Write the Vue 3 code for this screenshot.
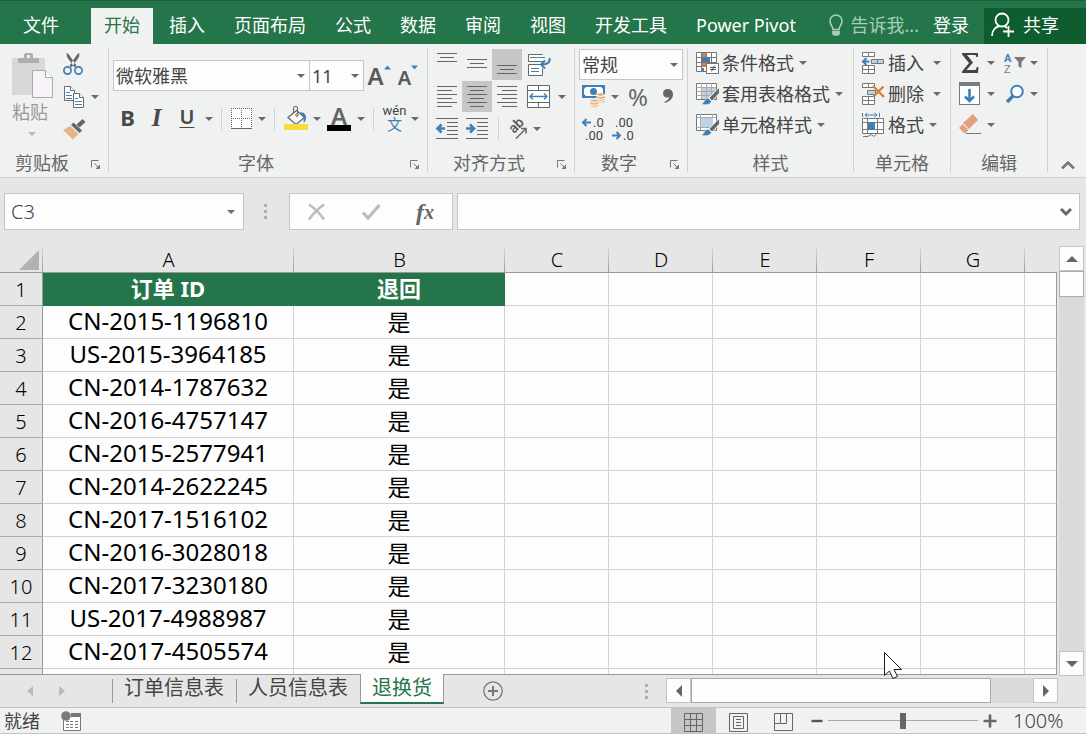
<script setup>
import { h, ref } from 'vue'

const Caret = (props) =>
  h('svg', { class: 'caret', width: 12, height: 8, viewBox: '0 0 12 8', 'aria-hidden': 'true' }, [
    h('path', { d: 'M2 2h8l-4 4z', fill: props.color || '#6a6a6a' })
  ])
Caret.props = ['color']

const Launcher = () =>
  h('svg', { width: 10, height: 10, viewBox: '0 0 10 10', fill: 'none', stroke: '#777', 'aria-hidden': 'true' }, [
    h('path', { d: 'M.5 7.5v-7h7M3.5 3.5l4 4' }),
    h('path', { d: 'M9 4.5V9H4.5z', fill: '#777', stroke: 'none' })
  ])

const tabs = ['开始', '插入', '页面布局', '公式', '数据', '审阅', '视图', '开发工具', 'Power Pivot']
const activeTab = ref('开始')

const columns = ['A', 'B', 'C', 'D', 'E', 'F', 'G', '']
const orders = [
  'CN-2015-1196810',
  'US-2015-3964185',
  'CN-2014-1787632',
  'CN-2016-4757147',
  'CN-2015-2577941',
  'CN-2014-2622245',
  'CN-2017-1516102',
  'CN-2016-3028018',
  'CN-2017-3230180',
  'US-2017-4988987',
  'CN-2017-4505574'
]
const sheets = ['订单信息表', '人员信息表', '退换货']
const activeSheet = ref('退换货')
const zoom = ref(50)
const formula = ref('')
const cellName = ref('C3')
</script>

<template>
  <div class="app">
    <nav class="tabbar" aria-label="功能区选项卡">
      <button class="file">文件</button>
      <button v-for="t in tabs" :key="t" class="tab" :class="{ active: t === activeTab }" @click="activeTab = t">{{ t }}</button>
      <span class="account">
        <button class="tell">
          <svg width="14" height="22" viewBox="0 0 14 22" fill="none" stroke="#a9cdb9" stroke-width="1.6" aria-hidden="true">
            <path d="M4 15.5c0-3-3-4.5-3-8.500a6 6 0 0 1 12 0c0 4-3 5.500-3 8.500z" />
            <path d="M4 17.500h6v2.500l-1.500 1h-3L4 20z" fill="#a9cdb9" />
          </svg>
          <span>告诉我...</span>
        </button>
        <button class="login">登录</button>
        <button class="share">
          <svg width="23" height="26" viewBox="0 0 23 26" fill="none" stroke="#fff" stroke-width="1.800" aria-hidden="true">
            <circle cx="11" cy="8" r="6.500" />
            <path d="M1 24c0-5 3-9 7.500-10M13.500 14l2.500 2M17.500 14v11M12 19.500h11" />
          </svg>
          <span>共享</span>
        </button>
      </span>
    </nav>

    <div class="ribbon">
      <section class="group clipboard">
        <div class="body clip-body">
          <button class="paste" disabled>
            <svg width="42" height="46" viewBox="0 0 42 46" aria-hidden="true">
              <rect x="0" y="6" width="33" height="37" rx="1" fill="#dad7da" />
              <path d="M6 10V7q0-1 1-1h5V3q0-2 2-2h5q2 0 2 2v3h5q1 0 1 1v4H6z" fill="#b0aeb0" />
              <rect x="15" y="3" width="3" height="3" fill="#f0f2f1" />
              <path d="M20.500 18.500h13l7 7v20h-20z" fill="#f7f2f8" stroke="#aaa" />
              <path d="M33.500 18.500v7h7" fill="#fff" stroke="#aaa" />
            </svg>
            <span>粘贴</span>
            <Caret color="#b8b8b8" />
          </button>
          <div class="stack">
            <button class="mini" aria-label="剪切">
              <svg width="22" height="22" viewBox="0 0 22 22" fill="none" aria-hidden="true">
                <path d="M3.500 0l2 1 8 11.500-2 2L4 4zM16.500 0l-2 1-8 11.500 2 2L16 4z" fill="#666" />
                <circle cx="4.500" cy="17.500" r="3.600" stroke="#3f7fb8" stroke-width="1.700" />
                <circle cx="15.500" cy="17.500" r="3.600" stroke="#3f7fb8" stroke-width="1.700" />
              </svg>
            </button>
            <div class="line">
              <button class="mini" aria-label="复制">
                <svg width="22" height="22" viewBox="0 0 22 22" fill="#fff" stroke="#6a6a6a" aria-hidden="true">
                  <path d="M1.500.5h6l4 4v10h-10z" />
                  <path d="M7.500.5v4h4" />
                  <path d="M3 6.500h4M3 9.500h6M3 12.500h6" stroke="#3f7fb8" />
                  <path d="M10.500 7.500h6l4 4v10h-10z" />
                  <path d="M16.500 7.500v4h4" />
                  <path d="M12 12.500h3M12 15.500h7M12 18.500h7" stroke="#3f7fb8" />
                </svg>
              </button>
              <button class="drop" aria-label="复制选项"><Caret /></button>
            </div>
            <button class="mini" aria-label="格式刷">
              <svg width="23" height="22" viewBox="0 0 23 22" aria-hidden="true">
                <path d="M19.500 0l3 3-6 5.500-3-3z" fill="#666" />
                <path d="M10.500 3.500l8.500 8-2.500 2.500L8 6z" fill="#666" />
                <path d="M7 7l8.500 8L10 20.500 0 11z" fill="#e9b384" />
              </svg>
            </button>
          </div>
        </div>
        <footer><span>剪贴板</span><button class="launch" aria-label="剪贴板设置"><Launcher /></button></footer>
      </section>

      <section class="group font">
        <div class="body font-body">
          <div class="line">
            <label class="combo family">
              <select aria-label="字体"><option>微软雅黑</option></select><Caret />
            </label>
            <label class="combo size">
              <select aria-label="字号"><option>11</option></select><Caret />
            </label>
            <button class="tool grow" aria-label="增大字号">
              <b>A</b>
              <svg width="7" height="5" viewBox="0 0 7 5" aria-hidden="true"><path d="M0 4.500L3.500.5 7 4.500z" fill="#3f7fb8" /></svg>
            </button>
            <button class="tool shrink" aria-label="减小字号">
              <b>A</b>
              <svg width="7" height="5" viewBox="0 0 7 5" aria-hidden="true"><path d="M0 .5h7L3.500 4.500z" fill="#3f7fb8" /></svg>
            </button>
          </div>
          <div class="line">
            <button class="tool letter bold">B</button>
            <button class="tool letter italic">I</button>
            <button class="tool letter under">U</button>
            <button class="drop" aria-label="下划线选项"><Caret /></button>
            <i class="sep"></i>
            <button class="tool border" aria-label="边框">
              <svg width="22" height="21" viewBox="0 0 22 21" stroke="#666" fill="none" shape-rendering="crispEdges" aria-hidden="true">
                <rect x="1" y="1" width="20" height="19" fill="#fff" stroke="none" />
                <path d="M0 .5h21M0 10.500h21M.5 0v20M10.500 0v20M20.500 0v20" stroke-dasharray="1 1" />
                <path d="M0 20.500h21" />
              </svg>
            </button>
            <button class="drop" aria-label="边框选项"><Caret /></button>
            <i class="sep"></i>
            <button class="tool fill" aria-label="填充颜色">
              <svg width="24" height="25" viewBox="0 0 24 25" fill="none" stroke="#666" aria-hidden="true">
                <path d="M12.500 4.500l8 7-8.500 7-8-7z" fill="#fff" stroke-width="1.300" />
                <path d="M9.500 8V2q0-1.500 1.500-1.500h1q1.500 0 1.500 1.500v6" />
                <circle cx="13" cy="9" r="1.300" fill="#fff" />
                <path d="M16 6c4 0 6.500 3 6 6 0 2-1 4-2.500 5 .5-3 .5-7-3.500-11z" fill="#3f7fb8" stroke="none" />
                <rect y="18" width="24" height="6" fill="#f8dc3d" stroke="none" />
              </svg>
            </button>
            <button class="drop" aria-label="填充颜色选项"><Caret /></button>
            <button class="tool ink" aria-label="字体颜色"><b>A</b></button>
            <button class="drop" aria-label="字体颜色选项"><Caret /></button>
            <i class="sep"></i>
            <button class="tool pinyin"><span>wén</span><span class="han">文</span></button>
            <button class="drop" aria-label="拼音选项"><Caret /></button>
          </div>
        </div>
        <footer><span>字体</span><button class="launch" aria-label="字体设置"><Launcher /></button></footer>
      </section>

      <section class="group align">
        <div class="body rows">
          <div class="line">
            <button class="cell" aria-label="顶端对齐"><svg width="20" height="23" viewBox="0 0 20 23" stroke="#666" aria-hidden="true"><path d="M0 .5h20M3 4.500h14M0 8.500h20" /></svg></button>
            <button class="cell" aria-label="垂直居中"><svg width="20" height="23" viewBox="0 0 20 23" stroke="#666" aria-hidden="true"><path d="M0 6.500h20M3 10.500h14M0 14.500h20" /></svg></button>
            <button class="cell on" aria-label="底端对齐"><svg width="20" height="23" viewBox="0 0 20 23" stroke="#666" aria-hidden="true"><path d="M0 12.500h20M3 16.500h14M0 20.500h20" /></svg></button>
            <button class="tool wrap" aria-label="自动换行">
              <svg width="24" height="23" viewBox="0 0 24 23" fill="none" stroke="#666" aria-hidden="true">
                <path d="M15.500 2V1.500h-14v7h14V8M15.500 12.500v-1h-14v11h14v-7" fill="#fff" />
                <path d="M3 4.500h15M4 15.500h8M4 18.500h8" stroke="#3f7fb8" />
                <path d="M22.500 5c1 4-2 6.500-7 6.500M18 7.500l-4 4 4 4" stroke="#3f7fb8" stroke-width="2" />
              </svg>
            </button>
          </div>
          <div class="line">
            <button class="cell" aria-label="左对齐"><svg width="20" height="21" viewBox="0 0 20 21" stroke="#666" aria-hidden="true"><path d="M0 .5h20M0 4.500h15M0 8.500h20M0 12.500h15M0 16.500h20M0 20.500h15" /></svg></button>
            <button class="cell on" aria-label="居中"><svg width="20" height="21" viewBox="0 0 20 21" stroke="#666" aria-hidden="true"><path d="M0 .5h20M3 4.500h14M0 8.500h20M3 12.500h14M0 16.500h20M3 20.500h14" /></svg></button>
            <button class="cell" aria-label="右对齐"><svg width="20" height="21" viewBox="0 0 20 21" stroke="#666" aria-hidden="true"><path d="M0 .5h20M5 4.500h15M0 8.500h20M5 12.500h15M0 16.500h20M5 20.500h15" /></svg></button>
            <button class="tool wrap" aria-label="合并后居中">
              <svg width="24" height="23" viewBox="0 0 24 23" fill="none" stroke="#666" aria-hidden="true">
                <path d="M.5.500h22v22H.5zM.5 5.500h22M.5 17.500h22M11.500 .5v5M11.500 17.500v5" fill="#fff" />
                <path d="M3 11.500h17M6 8.500l-3 3 3 3M17 8.500l3 3-3 3" stroke="#3f7fb8" stroke-width="1.400" />
              </svg>
            </button>
            <button class="drop" aria-label="合并选项"><Caret /></button>
          </div>
          <div class="line">
            <button class="cell" aria-label="减少缩进量">
              <svg width="22" height="21" viewBox="0 0 22 21" fill="none" stroke="#666" aria-hidden="true">
                <path d="M0 .5h22M11 4.500h11M11 8.500h11M11 12.500h11M11 16.500h11M0 20.500h22" />
                <path d="M9 10.500H2M5.500 6.500l-4 4 4 4" stroke="#3f7fb8" stroke-width="2.600" />
              </svg>
            </button>
            <button class="cell" aria-label="增加缩进量">
              <svg width="22" height="21" viewBox="0 0 22 21" fill="none" stroke="#666" aria-hidden="true">
                <path d="M0 .5h22M11 4.500h11M11 8.500h11M11 12.500h11M11 16.500h11M0 20.500h22" />
                <path d="M0 10.500h7M4 6.500l4 4-4 4" stroke="#3f7fb8" stroke-width="2.600" />
              </svg>
            </button>
            <i class="sep"></i>
            <button class="tool angle" aria-label="方向">
              <svg width="24" height="25" viewBox="0 0 24 25" fill="none" stroke="#666" aria-hidden="true">
                <text transform="translate(8 18) rotate(-45)" font-family="Roboto" font-weight="500" font-size="14" fill="#555" stroke="none">ab</text>
                <path d="M10 22.500L20 12.500M15 12.500h5v5" stroke-width="1.500" />
              </svg>
            </button>
            <button class="drop" aria-label="方向选项"><Caret /></button>
          </div>
        </div>
        <footer><span>对齐方式</span><button class="launch" aria-label="对齐设置"><Launcher /></button></footer>
      </section>

      <section class="group number">
        <div class="body rows">
          <label class="combo format">
            <select aria-label="数字格式"><option>常规</option></select><Caret />
          </label>
          <div class="line">
            <button class="cell" aria-label="会计数字格式">
              <svg width="24" height="23" viewBox="0 0 24 23" fill="none" aria-hidden="true">
                <rect x="0" y="0" width="23" height="13" fill="#3f7fb8" />
                <path d="M2 4l2-2h15l2 2v5l-2 2H4l-2-2z" fill="#fff" />
                <circle cx="11.500" cy="6.500" r="3.500" fill="#3f7fb8" />
                <path d="M14 9.500q0-1.500 4.500-1.500t4.500 1.500v8H14z" fill="#e9b384" />
                <path d="M8 15.500q0-1.500 4.500-1.500t4.500 1.500v6q-4.500 2-9 0z" fill="#e9b384" stroke="#f0f2f1" />
                <path d="M14 10.500q4.500 2 9 0M14 13.500q4.500 2 9 0M8.500 16.500q4 2 8 0M8.500 19.500q4 2 8 0M18 16.500q2 0 5-1" stroke="#fff" />
              </svg>
            </button>
            <button class="drop" aria-label="会计格式选项"><Caret /></button>
            <button class="tool percent">%</button>
            <button class="tool comma" aria-label="千位分隔">
              <svg width="12" height="17" viewBox="0 0 12 17" aria-hidden="true"><path d="M5.500 1c3.500 0 5.500 2 5.500 5.500 0 4-3.500 7-8 8.500L2.500 13.500C5.500 12.500 7 11 7 9 3.500 10.500 1 8.500 1 5.500 1 2.500 3 1 5.500 1z" fill="#666" /></svg>
            </button>
          </div>
          <div class="line">
            <button class="cell" aria-label="增加小数位数">
              <svg width="26" height="27" viewBox="0 0 26 27" font-family="Roboto" font-size="13" fill="#444" aria-hidden="true">
                <path d="M10 7.500H2M5.500 4L2 7.500 5.500 11" fill="none" stroke="#3f7fb8" stroke-width="2" />
                <text x="12" y="12">.0</text><text x="4" y="25">.00</text>
              </svg>
            </button>
            <button class="cell" aria-label="减少小数位数">
              <svg width="26" height="27" viewBox="0 0 26 27" font-family="Roboto" font-size="13" fill="#444" aria-hidden="true">
                <path d="M1 20.500h8M5.500 17L9 20.500 5.500 24" fill="none" stroke="#3f7fb8" stroke-width="2" />
                <text x="4" y="12">.00</text><text x="12" y="25">.0</text>
              </svg>
            </button>
          </div>
        </div>
        <footer><span>数字</span><button class="launch" aria-label="数字设置"><Launcher /></button></footer>
      </section>

      <section class="group styles">
        <div class="body items">
          <button class="item">
            <svg width="24" height="24" viewBox="0 0 24 24" fill="none" stroke="#777" aria-hidden="true">
              <path d="M.5 1.500h20v19H.5zM5.500 1v19M10.500 1v19M15.500 1v19M.5 6.500h20M.5 11.500h20M.5 15.500h20" fill="#fff" />
              <rect x="6" y="2" width="4" height="4" fill="#d2813a" stroke="none" />
              <rect x="6" y="7" width="8" height="4" fill="#3f7fb8" stroke="none" />
              <rect x="6" y="12" width="4" height="4" fill="#d2813a" stroke="none" />
              <rect x="6" y="17" width="2" height="3" fill="#3f7fb8" stroke="none" />
              <rect x="10.500" y="12.500" width="12" height="10" fill="#fff" />
              <path d="M14 16.500h6M14 18.500h6M18.500 14.500l-3 6" stroke="#555" />
            </svg>
            <span>条件格式</span><Caret />
          </button>
          <button class="item">
            <svg width="24" height="24" viewBox="0 0 24 24" fill="none" stroke="#777" aria-hidden="true">
              <path d="M.5 1.500h20v16H.5z" fill="#fff" />
              <path d="M5 6h15v11H5z" fill="#bfd3e6" stroke="none" />
              <path d="M5.500 1v16M10.500 1v16M15.500 1v16M.5 5.500h20M.5 9.500h20M.5 13.500h20" stroke="#aaa" />
              <path d="M22.500 6l1 1v4L16 19l-3-3z" fill="#666" stroke="#f0f2f1" />
              <path d="M12 16l3.500 3.500C14 23 9 23.500 5 22c3 0 3-5 7-6z" fill="#3f7fb8" stroke="#f0f2f1" stroke-width=".6" />
            </svg>
            <span>套用表格格式</span><Caret />
          </button>
          <button class="item">
            <svg width="24" height="24" viewBox="0 0 24 24" fill="none" stroke="#777" aria-hidden="true">
              <path d="M.5 1.500h20v16H.5z" fill="#fff" />
              <path d="M.5 4.500h20M4.500 1v16M16.500 1v3M.5 14.500h16" stroke="#aaa" />
              <path d="M5 5h12v9H5z" fill="#bfd3e6" stroke="none" />
              <path d="M22.500 6l1 1v4L16 19l-3-3z" fill="#666" stroke="#f0f2f1" />
              <path d="M12 16l3.500 3.500C14 23 9 23.500 5 22c3 0 3-5 7-6z" fill="#3f7fb8" stroke="#f0f2f1" stroke-width=".6" />
            </svg>
            <span>单元格样式</span><Caret />
          </button>
        </div>
        <footer><span>样式</span></footer>
      </section>

      <section class="group cells">
        <div class="body items">
          <div class="line">
            <button class="item">
              <svg width="24" height="24" viewBox="0 0 24 24" fill="#fff" stroke="#777" aria-hidden="true">
                <path d="M.5 1.500h12v4H.5zM6.500 1.500v4M.5 14.500h12v8H.5zM.5 18.500h12M6.500 14.500v8" />
                <path d="M9.500 8.500h12v4h-12zM15.500 8.500v4" fill="#bfd3e6" />
                <path d="M7.500 10.500H1M4.500 7l-3.500 3.500L4.500 14" fill="none" stroke="#3f7fb8" stroke-width="2" />
              </svg>
              <span>插入</span>
            </button>
            <button class="drop" aria-label="插入选项"><Caret /></button>
          </div>
          <div class="line">
            <button class="item">
              <svg width="24" height="24" viewBox="0 0 24 24" fill="#fff" stroke="#777" aria-hidden="true">
                <path d="M.5 1.500h12v4H.5zM6.500 1.500v4M.5 14.500h12v8H.5zM.5 18.500h12M6.500 14.500v8" />
                <path d="M5.500 8.500h8v4h-8z" fill="#bfd3e6" />
                <path d="M11 4l11 11M21.500 4.500L11.500 14.500" stroke="#d2813a" stroke-width="2.400" />
              </svg>
              <span>删除</span>
            </button>
            <button class="drop" aria-label="删除选项"><Caret /></button>
          </div>
          <button class="item">
            <svg width="24" height="24" viewBox="0 0 24 24" fill="none" stroke="#777" aria-hidden="true">
              <path d="M.5 5.500h21v15H.500zM.5 9.500h21M.5 16.500h21M5.500 5.500v15M15.500 5.500v15" fill="#fff" />
              <rect x="6" y="9" width="7" height="8" fill="#3f7fb8" stroke="none" />
              <path d="M1 23.500h5l3-2 3 2 3-3" />
              <path d="M.5 0v4M17.500 0v4M3 2h12M5.500 0L3 2l2.500 2M12.500 0L15 2l-2.500 2" stroke="#3f7fb8" />
            </svg>
            <span>格式</span><Caret />
          </button>
        </div>
        <footer><span>单元格</span></footer>
      </section>

      <section class="group editing">
        <div class="body items">
          <div class="line">
            <button class="cell" aria-label="自动求和">
              <svg width="20" height="20" viewBox="0 0 20 20" aria-hidden="true"><path d="M2 0h16v4h-1.500l-1-2H7l6 7.500L6.500 17h9l1.500-3h1.500L18 20H2v-1.500L9 10 2 1.500z" fill="#444" /></svg>
            </button>
            <button class="drop" aria-label="求和选项"><Caret /></button>
            <button class="cell second" aria-label="排序和筛选">
              <svg width="22" height="24" viewBox="0 0 22 24" font-family="Roboto" font-size="11" aria-hidden="true">
                <text x="0" y="11" fill="#3f7fb8" font-weight="700">A</text>
                <text x="0" y="22" fill="#777">Z</text>
                <path d="M10 6h12l-4.500 5v6l-3-1.500V11z" fill="#777" />
              </svg>
            </button>
            <button class="drop" aria-label="排序选项"><Caret /></button>
          </div>
          <div class="line">
            <button class="cell" aria-label="填充">
              <svg width="22" height="24" viewBox="0 0 22 24" fill="none" aria-hidden="true">
                <rect x=".5" y=".5" width="20" height="22" fill="#fff" stroke="#777" />
                <rect width="21" height="4" fill="#777c82" />
                <path d="M10.500 7v12M6 14.500l4.500 4.500 4.500-4.500" stroke="#3f7fb8" stroke-width="2.600" />
              </svg>
            </button>
            <button class="drop" aria-label="填充选项"><Caret /></button>
            <button class="cell second" aria-label="查找和选择">
              <svg width="20" height="20" viewBox="0 0 20 20" fill="none" stroke="#3f7fb8" aria-hidden="true"><circle cx="12" cy="7.500" r="5.800" stroke-width="2" fill="#fff" /><path d="M8 12l-6 6" stroke-width="3.400" /></svg>
            </button>
            <button class="drop" aria-label="查找选项"><Caret /></button>
          </div>
          <div class="line">
            <button class="cell" aria-label="清除">
              <svg width="22" height="22" viewBox="0 0 22 22" aria-hidden="true">
                <path d="M14 0l5 6-9 9-6-6z" fill="#e3a07e" /><path d="M3.500 10l6 6-3 3H5l-5-5z" fill="#e3a07e" /><path d="M7 19.500h15" stroke="#777" />
              </svg>
            </button>
            <button class="drop" aria-label="清除选项"><Caret /></button>
          </div>
        </div>
        <footer><span>编辑</span></footer>
      </section>
      <button class="collapse" aria-label="折叠功能区">
        <svg width="14" height="10" viewBox="0 0 14 10" fill="none" stroke="#777" stroke-width="2.600" aria-hidden="true"><path d="M1 8.500l6-6 6 6" /></svg>
      </button>
    </div>

    <div class="formulabar">
      <label class="namebox">
        <input v-model="cellName" aria-label="名称框" />
        <Caret />
      </label>
      <span class="grip"><i></i><i></i><i></i></span>
      <div class="fxbox">
        <button aria-label="取消"><svg width="20" height="18" viewBox="0 0 20 18" fill="none" stroke="#bdbdbd" stroke-width="2.600" aria-hidden="true"><path d="M2 1.500q8 5 15 15M17 1.500Q8 8 2 16.500" /></svg></button>
        <button aria-label="输入"><svg width="20" height="18" viewBox="0 0 20 18" fill="none" stroke="#bdbdbd" stroke-width="3.200" aria-hidden="true"><path d="M2 9.500l5 5.500L18.500 2" /></svg></button>
        <button class="fx" aria-label="插入函数"><span>f</span><span class="x">x</span></button>
      </div>
      <label class="formula">
        <input v-model="formula" aria-label="编辑栏" />
        <svg width="12" height="10" viewBox="0 0 12 10" fill="none" stroke="#666" stroke-width="3" aria-hidden="true"><path d="M1 2l5 5 5-5" /></svg>
      </label>
    </div>

    <main class="work">
      <div class="left">
        <div class="viewport">
          <table>
            <colgroup>
              <col class="w-head" /><col class="w-a" /><col class="w-b" />
              <col v-for="n in 5" :key="n" class="w-n" /><col />
            </colgroup>
            <thead>
              <tr>
                <th class="corner"><svg width="20" height="20" viewBox="0 0 20 20" aria-hidden="true"><path d="M20 0v20H0z" fill="#b1b3b2" /></svg></th>
                <th v-for="(c, i) in columns" :key="i" scope="col">{{ c }}</th>
              </tr>
            </thead>
            <tbody>
              <tr>
                <th scope="row">1</th>
                <td class="title">订单 ID</td>
                <td class="title">退回</td>
                <td v-for="n in 6" :key="n"></td>
              </tr>
              <tr v-for="(o, i) in orders" :key="o">
                <th scope="row">{{ i + 2 }}</th>
                <td>{{ o }}</td>
                <td class="flag">是</td>
                <td v-for="n in 6" :key="n"></td>
              </tr>
              <tr>
                <th scope="row"></th>
                <td v-for="n in 8" :key="n"></td>
              </tr>
            </tbody>
          </table>
        </div>
        <div class="sheetbar">
          <div class="navs">
            <button aria-label="上一个工作表"><svg width="6" height="10" viewBox="0 0 6 10" aria-hidden="true"><path d="M6 0v10L0 5z" fill="#bbb" /></svg></button>
            <button aria-label="下一个工作表"><svg width="6" height="10" viewBox="0 0 6 10" aria-hidden="true"><path d="M0 0v10l6-5z" fill="#bbb" /></svg></button>
          </div>
          <button v-for="s in sheets" :key="s" class="sheet" :class="{ current: s === activeSheet }" @click="activeSheet = s">{{ s }}</button>
          <button class="add" aria-label="新工作表">
            <svg width="20" height="20" viewBox="0 0 20 20" fill="none" stroke="#777" aria-hidden="true"><circle cx="10" cy="10" r="9.200" stroke-width="1.300" /><path d="M10 5v10M5 10h10" stroke-width="2" /></svg>
          </button>
          <span class="grip push"><i></i><i></i><i></i></span>
          <div class="hscroll">
            <button aria-label="向左滚动"><svg width="6" height="12" viewBox="0 0 6 12" aria-hidden="true"><path d="M6 0v12L0 6z" fill="#666" /></svg></button>
            <div class="hthumb"></div>
            <div class="htrack"></div>
            <button aria-label="向右滚动"><svg width="6" height="12" viewBox="0 0 6 12" aria-hidden="true"><path d="M0 0v12l6-6z" fill="#666" /></svg></button>
          </div>
        </div>
      </div>
      <div class="vscroll">
        <button aria-label="向上滚动"><svg width="12" height="6" viewBox="0 0 12 6" aria-hidden="true"><path d="M0 6h12L6 0z" fill="#666" /></svg></button>
        <div class="vthumb"></div>
        <div class="vtrack"></div>
        <button aria-label="向下滚动"><svg width="12" height="6" viewBox="0 0 12 6" aria-hidden="true"><path d="M0 0h12L6 6z" fill="#666" /></svg></button>
      </div>
    </main>

    <div class="status">
      <span>就绪</span>
      <button class="macro" aria-label="录制宏">
        <svg width="21" height="20" viewBox="0 0 21 20" aria-hidden="true">
          <path d="M2.500 8v11.500h17V4" fill="#fff" stroke="#777" />
          <path d="M10 2h10v4H10z" fill="#777" />
          <path d="M5 10.500h3M9 10.500h3M14 10.500h3M5 13.500h3M9 13.500h3M14 13.500h3M5 16.500h3M9 16.500h3M14 16.500h3" stroke="#777" />
          <circle cx="5" cy="5" r="4.800" fill="#777c82" />
        </svg>
      </button>
      <div class="views">
        <button class="on" aria-label="普通"><svg width="19" height="19" viewBox="0 0 19 19" fill="none" stroke="#666" aria-hidden="true"><path d="M.5.500h18v18H.5zM6.500 0v19M12.500 0v19M0 6.500h19M0 12.500h19" /></svg></button>
        <button aria-label="页面布局"><svg width="19" height="19" viewBox="0 0 19 19" fill="none" stroke="#666" aria-hidden="true"><path d="M.5.500h18v18H.5zM4.500 3.500h10v12h-10zM7 6.500h5M7 9.500h5M7 12.500h5" /></svg></button>
        <button aria-label="分页预览"><svg width="19" height="19" viewBox="0 0 19 19" fill="none" stroke="#666" aria-hidden="true"><path d="M.5.500h18v17H.5zM.5 10.500h12V.5M6.500 .5v10" /></svg></button>
      </div>
      <button class="zoombtn minus" aria-label="缩小"><svg width="12" height="12" viewBox="0 0 12 12" aria-hidden="true"><path d="M.5 6h11" stroke="#555" stroke-width="2.400" /></svg></button>
      <input v-model="zoom" class="slider" type="range" min="0" max="100" aria-label="显示比例" />
      <button class="zoombtn" aria-label="放大"><svg width="14" height="14" viewBox="0 0 14 14" aria-hidden="true"><path d="M.5 7h13M7 .5v13" stroke="#666" stroke-width="2.600" /></svg></button>
      <span class="pct">100%</span>
    </div>

    <svg class="pointer" width="19" height="28" viewBox="0 0 19 28" aria-hidden="true">
      <path d="M.5.500v23l5-4.500 3.500 7.500 4.500-2-3.500-7h7.500z" fill="#fff" stroke="#1c1c30" />
    </svg>
  </div>
</template>

<style>
body {
  margin: 0;
}
</style>

<style scoped>
.app {
  position: relative;
  display: flex;
  flex-direction: column;
  height: 100vh;
  overflow: hidden;
  background: #e6e6e6;
  color: #444;
  font: 18px/24px "Noto Sans", "Noto Sans CJK SC", sans-serif;
  box-sizing: border-box;
}
.app * {
  box-sizing: border-box;
}
svg {
  display: block;
  flex: none;
  overflow: visible;
}
button {
  display: flex;
  align-items: center;
  justify-content: center;
  flex: none;
  padding: 0;
  border: 0;
  background: none;
  color: inherit;
  font: inherit;
  white-space: nowrap;
}
input,
select {
  appearance: none;
  min-width: 0;
  padding: 0;
  border: 0;
  outline: 0;
  background: none;
  color: #444;
  font: inherit;
}

/* tab bar */
.tabbar {
  display: flex;
  gap: 3px;
  height: 44px;
  padding-top: 7px;
  border-top: 1px solid #1a5f38;
  background: #247549;
  color: #fff;
}
.tabbar button {
  padding-bottom: 2px;
}
.file {
  width: 82px;
  margin-right: 6px;
}
.tabbar .tab {
  padding: 0 13px 2px;
}
.tab.active {
  background: #f0f2f1;
  color: #247549;
}
.account {
  display: flex;
  flex: 1;
  justify-content: flex-end;
}
.tell {
  gap: 8px;
  margin-right: 14px;
  color: #a9cdb9;
}
.login {
  margin-right: 15px;
}
.share {
  gap: 9px;
  width: 102px;
  padding-right: 20px;
  background: #0f5c2f;
}

/* ribbon */
.ribbon {
  display: flex;
  height: 134px;
  padding: 4px 0 5px;
  border-bottom: 1px solid #cfd1d0;
  background: #f0f2f1;
}
.group {
  display: flex;
  flex-direction: column;
  flex: none;
  border-right: 1px solid #d0d2d1;
}
.clipboard { width: 109px; }
.font { width: 319px; }
.align { width: 147px; }
.number { width: 113px; }
.styles { width: 166px; }
.cells { width: 97px; }
.editing { width: 97px; }
.body {
  display: flex;
  flex: 1;
  min-height: 0;
  padding: 0 4px;
}
.group footer {
  display: flex;
  align-items: center;
  height: 18px;
  color: #666;
}
.group footer span {
  flex: 1;
  text-align: center;
}
.launch {
  width: 24px;
  padding-top: 4px;
}
.line {
  display: flex;
  align-items: center;
}
.stack,
.rows,
.items,
.font-body {
  flex-direction: column;
}
.clip-body {
  padding: 4px 0 0 12px;
}
.paste {
  flex-direction: column;
  align-items: flex-start;
  justify-content: flex-start;
  gap: 2px;
  width: 50px;
  color: #999;
}
.paste .caret {
  margin: 4px 0 0 14px;
}
.stack {
  display: flex;
  gap: 11px;
  padding-top: 1px;
}
.mini {
  width: 24px;
  height: 22px;
}
.drop {
  width: 12px;
  height: 30px;
}
.stack .drop {
  height: 22px;
  margin-left: 3px;
}
.font-body {
  gap: 12px;
  padding-top: 12px;
}
.rows {
  gap: 1px;
  padding-top: 1px;
}
.rows .line {
  height: 31px;
}
.items {
  gap: 1px;
  padding-left: 8px;
}
.items .line,
.items > .item {
  height: 30px;
}
.editing .items {
  padding-left: 4px;
}
.item {
  gap: 2px;
  justify-content: flex-start;
}
.item .caret {
  margin-left: 1px;
}
.items .line .item {
  margin-right: 7px;
}
.combo {
  display: flex;
  align-items: center;
  flex: none;
  height: 31px;
  padding: 0 2px;
  border: 1px solid #c6c6c6;
  background: #fdfdfd;
}
.combo select {
  flex: 1;
}
.family { width: 197px; }
.size {
  width: 54px;
  border-left: 0;
}
.format { width: 104px; }
.tool,
.cell {
  width: 30px;
  height: 31px;
}
.second {
  width: 31px;
  padding-left: 5px;
}
.on {
  background: #c6c6c6;
}
.sep {
  width: 1px;
  height: 22px;
  margin: 0 6px;
  background: #d0d2d1;
}
.grow,
.shrink {
  align-items: flex-start;
  color: #5a5a5a;
}
.grow {
  font-size: 24px;
  line-height: 32px;
}
.shrink {
  width: 28px;
  font-size: 20px;
  line-height: 36px;
}
.grow b,
.shrink b,
.ink b {
  font-weight: 600;
}
.grow svg,
.shrink svg {
  margin-top: 5px;
}
.letter {
  width: 29px;
  padding-bottom: 4px;
  color: #484848;
  font-size: 22px;
  font-weight: 700;
}
.italic {
  padding-bottom: 2px;
  font-family: "Liberation Serif", serif;
  font-style: italic;
  font-size: 25px;
}
.under {
  width: 32px;
  font-size: 20px;
  font-weight: 600;
  text-decoration: underline;
  text-decoration-thickness: 1px;
  text-underline-offset: 3px;
}
.border { width: 28px; }
.ink {
  width: 24px;
  height: 25px;
  margin: 0 4px;
  border-bottom: 6px solid #000;
  color: #666;
  font-size: 24px;
  line-height: 18px;
}
.pinyin {
  flex-direction: column;
  width: 29px;
  font-family: Roboto, "Noto Sans CJK SC", sans-serif;
  font-size: 13px;
  line-height: 12px;
}
.pinyin .han {
  color: #3f7fb8;
  font-size: 15px;
  line-height: 16px;
}
.wrap { width: 34px; }
.angle { width: 26px; }
.percent {
  width: 34px;
  color: #666;
  font-size: 24px;
}
.comma { width: 26px; }
.collapse {
  align-self: flex-end;
  width: 40px;
  height: 14px;
}

/* formula bar */
.formulabar {
  display: flex;
  height: 67px;
  padding: 15px 6px 15px 4px;
}
.namebox,
.fxbox,
.formula {
  display: flex;
  align-items: center;
  border: 1px solid #c6c6c6;
  background: #fdfdfd;
}
.namebox {
  width: 240px;
  padding: 0 6px;
  font-size: 20px;
  font-weight: 300;
}
.namebox input,
.formula input {
  flex: 1;
}
.grip {
  display: flex;
  flex-direction: column;
  justify-content: center;
  gap: 3px;
  width: 45px;
  padding-left: 20px;
}
.grip i {
  width: 3px;
  height: 3px;
  background: #b0b0b0;
}
.fxbox {
  width: 164px;
  margin-right: 4px;
}
.fxbox button {
  flex: 1;
}
.fx {
  color: #666;
  font-family: "Liberation Serif", serif;
  font-style: italic;
  font-weight: 700;
  font-size: 24px;
}
.fx .x {
  font-size: 20px;
}
.formula {
  flex: 1;
  padding: 0 7px 0 8px;
}

/* grid */
.work {
  display: flex;
  flex: 1;
  min-height: 0;
}
.left {
  display: flex;
  flex-direction: column;
  flex: 1;
  min-width: 0;
}
.viewport {
  flex: 1;
  min-height: 0;
  overflow: hidden;
  border-bottom: 1px solid #999;
}
table {
  width: 100%;
  border-spacing: 0;
  table-layout: fixed;
}
.w-head { width: 43px; }
.w-a { width: 251px; }
.w-b { width: 211px; }
.w-n { width: 104px; }
td,
th {
  height: 33px;
  padding: 0;
  line-height: 30px;
  text-align: center;
  white-space: nowrap;
}
td {
  padding-bottom: 2px;
  border-right: 1px solid #d2d2d2;
  border-bottom: 1px solid #d2d2d2;
  background: #fdfdfd;
  color: #000;
  font-size: 24px;
}
.flag {
  padding-bottom: 0;
  font-size: 23px;
}
td:last-child {
  border-right-color: #999;
}
th {
  border-right: 1px solid #999;
  border-bottom: 1px solid #ababab;
  color: #000;
  font-size: 20px;
  font-weight: 300;
}
thead th {
  height: 28px;
  padding-top: 3px;
  border-right: 0;
  border-bottom-color: #999;
  background: linear-gradient(#e0e0e0, #999) right / 1px 100% no-repeat;
  line-height: 24px;
}
thead th:last-child {
  background: none;
}
tbody th {
  padding-top: 2px;
}
.corner svg {
  margin: 0 0 0 19px;
}
.title {
  border-color: #247549;
  background: #247549;
  color: #fff;
  font-size: 22px;
  font-weight: 700;
}

/* sheet tabs */
.sheetbar {
  display: flex;
  height: 32px;
  font-size: 20px;
}
.navs {
  display: flex;
  width: 112px;
  padding-left: 14px;
}
.navs button {
  width: 32px;
}
.sheet {
  height: 30px;
  padding: 0 12px 4px;
  background: linear-gradient(#999, #999) left 4px / 1px 24px no-repeat;
}
.sheet.current {
  margin-top: -1px;
  padding: 0 11px 1px;
  border: solid #999;
  border-width: 0 1px;
  border-bottom: 2px solid #247549;
  background: #fdfdfd;
  color: #247549;
}
.add {
  width: 98px;
}
.push {
  width: 21px;
  margin-left: auto;
  padding-left: 0;
}
.hscroll {
  display: flex;
  width: 392px;
  height: 25px;
  margin: 3px -1px 0 0;
}
.hscroll button,
.vscroll button {
  width: 25px;
  height: 25px;
  border: 1px solid #c4c4c4;
  background: #fdfdfd;
}
.htrack {
  flex: 1;
  background: #dadada;
}
.hthumb {
  flex: 7;
  border: 1px solid #ababab;
  background: #fdfdfd;
}
.vscroll {
  display: flex;
  flex-direction: column;
  width: 29px;
  padding: 1px 2px 31px;
}
.vthumb {
  width: 25px;
  height: 26px;
  border: 1px solid #ababab;
  background: #fdfdfd;
}
.vtrack {
  flex: 1;
  width: 25px;
  background: #dadada;
}

/* status bar */
.status {
  display: flex;
  align-items: center;
  height: 27px;
  padding: 0 24px 0 4px;
  border: solid #c4c4c4;
  border-width: 1px 0;
  background: #f0f2f1;
}
.macro {
  margin-left: 21px;
}
.views {
  display: flex;
  align-self: stretch;
  margin-left: auto;
}
.views button {
  width: 45px;
  padding-top: 4px;
}
.zoombtn {
  width: 24px;
}
.minus {
  width: 22px;
}
.slider {
  width: 150px;
  height: 18px;
  margin: 0;
  background: linear-gradient(#aaa, #aaa) center / 100% 1px no-repeat;
}
.slider::-webkit-slider-thumb {
  appearance: none;
  width: 6px;
  height: 16px;
  background: #666;
}
.pct {
  width: 60px;
  padding-left: 11px;
  font-size: 20px;
  font-weight: 300;
}

.pointer {
  position: absolute;
  left: 884px;
  top: 652px;
}
</style>
